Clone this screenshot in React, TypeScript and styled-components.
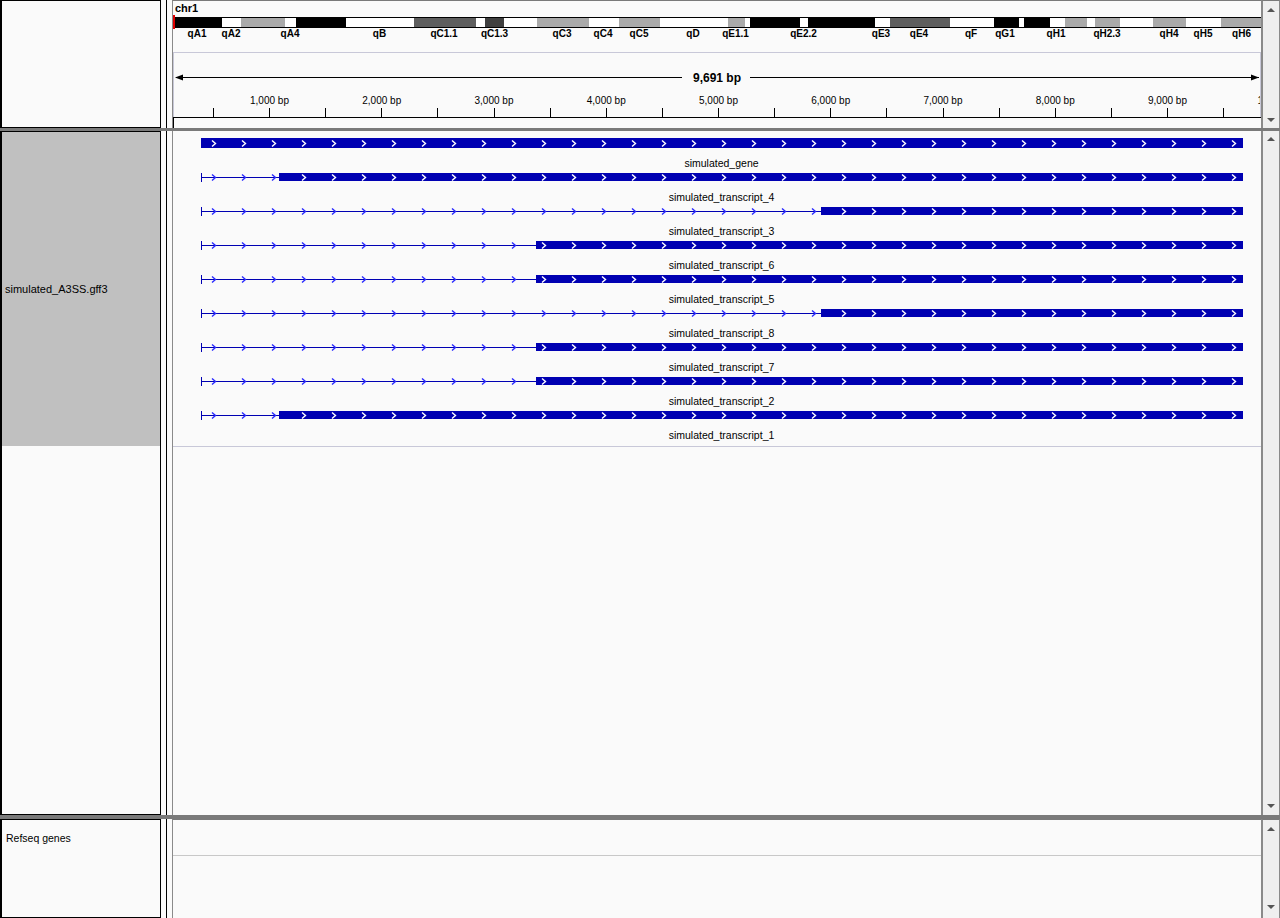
import React from "react";
import styled, { createGlobalStyle } from "styled-components";

const GlobalStyle = createGlobalStyle`
  html, body {
    margin: 0;
    padding: 0;
    background: #fafafa;
  }
  body {
    font-family: "Liberation Sans", Arial, sans-serif;
  }
`;

// ruler scale, page pixels
const PX0 = 156.75;
const PX_PER_BP = 0.11225;
const bpX = (b: number) => PX0 + b * PX_PER_BP;

const BANDS: [number, number, string][] = [
  [175, 222, "#000"],
  [222, 241, "#fff"],
  [241, 285, "#aaa"],
  [285, 296, "#fff"],
  [296, 346, "#000"],
  [346, 414, "#fff"],
  [414, 476, "#5e5e5e"],
  [476, 485, "#fff"],
  [485, 504, "#404040"],
  [504, 537, "#fff"],
  [537, 589, "#aaa"],
  [589, 619, "#fff"],
  [619, 660, "#aaa"],
  [660, 728, "#fff"],
  [728, 745, "#aaa"],
  [745, 750, "#fff"],
  [750, 800, "#000"],
  [800, 808, "#fff"],
  [808, 875, "#000"],
  [875, 890, "#fff"],
  [890, 950, "#5e5e5e"],
  [950, 994, "#fff"],
  [994, 1019, "#000"],
  [1019, 1024, "#fff"],
  [1024, 1050, "#000"],
  [1050, 1065, "#fff"],
  [1065, 1087, "#aaa"],
  [1087, 1095, "#fff"],
  [1095, 1120, "#aaa"],
  [1120, 1153, "#fff"],
  [1153, 1186, "#aaa"],
  [1186, 1221, "#fff"],
  [1221, 1261, "#aaa"],
];

const BAND_LABELS: [string, number][] = [
  ["qA1", 197],
  ["qA2", 231],
  ["qA4", 290],
  ["qB", 379.5],
  ["qC1.1", 444],
  ["qC1.3", 494.5],
  ["qC3", 562],
  ["qC4", 603],
  ["qC5", 639],
  ["qD", 693],
  ["qE1.1", 735.5],
  ["qE2.2", 803.5],
  ["qE3", 881],
  ["qE4", 919],
  ["qF", 971],
  ["qG1", 1005],
  ["qH1", 1056],
  ["qH2.3", 1107],
  ["qH4", 1169],
  ["qH5", 1203],
  ["qH6", 1241.5],
];

// feature rows: exon start in page x (201 = whole feature is one block)
const ROWS = [
  { label: "simulated_gene", exon: 201, gene: true },
  { label: "simulated_transcript_4", exon: 279 },
  { label: "simulated_transcript_3", exon: 821 },
  { label: "simulated_transcript_6", exon: 536 },
  { label: "simulated_transcript_5", exon: 536 },
  { label: "simulated_transcript_8", exon: 821 },
  { label: "simulated_transcript_7", exon: 536 },
  { label: "simulated_transcript_2", exon: 536 },
  { label: "simulated_transcript_1", exon: 279 },
];

const DATA_X = 173;
const F_START = 201 - DATA_X;
const F_END = 1243 - DATA_X;
const CHEVRONS = Array.from({ length: 35 }, (_, k) => 41 + 30 * k).filter(
  (x) => x > F_START + 4 && x < F_END - 3
);

const Frame = styled.div`
  width: 1280px;
  height: 918px;
  display: flex;
  flex-direction: column;
  background: #fafafa;
  overflow: hidden;
`;

const Section = styled.div<{ $h: number }>`
  display: flex;
  flex: none;
  height: ${(p) => p.$h}px;
`;

const Divider = styled.div<{ $h: number }>`
  flex: none;
  height: ${(p) => p.$h}px;
  background: #7a7a7a;
`;

const NamePanel = styled.div`
  width: 161px;
  flex: none;
  box-sizing: border-box;
  border: 1px solid #000;
  border-left-width: 2px;
  background: #fafafa;
  display: flex;
  flex-direction: column;
`;

const TrackName = styled.div<{ $h: number }>`
  height: ${(p) => p.$h}px;
  background: #c0c0c0;
  display: flex;
  align-items: center;
  padding-left: 3px;
  font-size: 11px;
  color: #000;
  flex: none;
`;

const PlainName = styled.div`
  padding: 12px 0 0 4px;
  font-size: 10.5px;
  line-height: 12px;
  color: #000;
`;

const AttrColumn = styled.div`
  width: 11px;
  flex: none;
  background: linear-gradient(
    90deg,
    transparent 5px,
    #000 5px,
    #000 6px,
    transparent 6px
  );
`;

const DataPanel = styled.div<{ $top?: boolean }>`
  flex: 1;
  min-width: 0;
  box-sizing: border-box;
  border-left: 1px solid #8a8a8a;
  border-top: ${(p) => (p.$top ? "1px solid #7a7a7a" : "none")};
  display: flex;
  flex-direction: column;
  overflow: hidden;
  background: #fafafa;
`;

const Scrollbar = styled.div<{ $pad: string; $top?: boolean }>`
  width: 19px;
  flex: none;
  box-sizing: border-box;
  border-left: 2px solid #8a8a8a;
  border-right: 1px solid #8a8a8a;
  border-top: ${(p) => (p.$top ? "1px solid #7a7a7a" : "none")};
  background: #efefef;
  display: flex;
  flex-direction: column;
  justify-content: space-between;
  align-items: center;
  padding: ${(p) => p.$pad};
`;

const ScrollArrow = styled.span<{ $down?: boolean }>`
  width: 0;
  height: 0;
  border-left: 4px solid transparent;
  border-right: 4px solid transparent;
  ${(p) =>
    p.$down
      ? "border-top: 4px solid #555;"
      : "border-bottom: 4px solid #555;"}
`;

const ChromArea = styled.div`
  height: 51px;
  flex: none;
  display: flex;
  flex-direction: column;
`;

const ChrLabel = styled.div`
  padding: 1px 0 0 2px;
  height: 13px;
  font-size: 11px;
  line-height: 13px;
  font-weight: bold;
  color: #000;
`;

const RulerBox = styled.div`
  height: 65px;
  flex: none;
  box-sizing: border-box;
  border-top: 1px solid #c8c8d8;
  border-left: 1px solid #c8c8d8;
  border-right: 1px solid #c8c8d8;
`;

const BottomStrip = styled.div`
  flex: 1;
  border-top: 1px solid #000;
  border-left: 1px solid #000;
`;

const FeatureTrack = styled.div`
  height: 316px;
  flex: none;
  box-sizing: border-box;
  border-bottom: 1px solid #c8c8d8;
`;

const RefTrack = styled.div`
  height: 36px;
  flex: none;
  box-sizing: border-box;
  border-bottom: 1px solid #c8c8c8;
`;

const Drawing = styled.svg`
  display: block;
  overflow: hidden;
  text {
    font-family: "Liberation Sans", Arial, sans-serif;
  }
`;

const Ideogram = () => (
  <Drawing width={1088} height={37}>
    {BANDS.map(([a, b, c]) => (
      <rect
        key={a}
        x={a - DATA_X}
        y={2}
        width={b - a}
        height={11}
        fill={c}
        shapeRendering="crispEdges"
      />
    ))}
    <rect x={2} y={2} width={1086} height={1} fill="#000" shapeRendering="crispEdges" />
    <rect x={2} y={12} width={1086} height={1} fill="#000" shapeRendering="crispEdges" />
    <rect x={0} y={0} width={2} height={14} fill="#e00000" shapeRendering="crispEdges" />
    {BAND_LABELS.map(([t, x]) => (
      <text
        key={t}
        x={x - DATA_X}
        y={22}
        fontSize={10}
        fontWeight="bold"
        textAnchor="middle"
        fill="#000"
      >
        {t}
      </text>
    ))}
  </Drawing>
);

const Ruler = () => {
  const off = 174;
  const ticks = Array.from({ length: 19 }, (_, i) => 500 * (i + 1));
  const labels = Array.from({ length: 10 }, (_, i) => 1000 * (i + 1));
  return (
    <Drawing width={1086} height={64}>
      <rect x={2} y={24} width={506} height={1} fill="#000" shapeRendering="crispEdges" />
      <rect x={576} y={24} width={509} height={1} fill="#000" shapeRendering="crispEdges" />
      <polygon points="1,24.5 9,21.5 9,27.5" fill="#000" />
      <polygon points="1085,24.5 1077,21.5 1077,27.5" fill="#000" />
      <text x={717 - off} y={28.5} fontSize={12} fontWeight="bold" textAnchor="middle" fill="#000">
        9,691 bp
      </text>
      {ticks.map((b) => (
        <rect
          key={b}
          x={Math.round(bpX(b)) - off}
          y={55}
          width={1}
          height={9}
          fill="#000"
          shapeRendering="crispEdges"
        />
      ))}
      {labels.map((b) => (
        <text
          key={b}
          x={bpX(b) - off + 0.5}
          y={50.5}
          fontSize={10}
          textAnchor="middle"
          fill="#000"
        >
          {`${(b / 1000).toLocaleString("en-US")},000 bp`}
        </text>
      ))}
    </Drawing>
  );
};

const Chevron = ({ x, c, color }: { x: number; c: number; color: string }) => (
  <polyline
    points={`${x - 2},${c - 3} ${x + 1.5},${c} ${x - 2},${c + 3}`}
    fill="none"
    stroke={color}
    strokeWidth={1.4}
  />
);

const Features = () => (
  <Drawing width={1088} height={315}>
    {ROWS.map((r, i) => {
      const c = 12 + 34 * i;
      const ex = r.exon - DATA_X;
      const half = r.gene ? 5 : 4;
      return (
        <g key={r.label}>
          {ex > F_START && (
            <>
              <rect x={F_START} y={c} width={ex - F_START} height={1} fill="#0000b2" shapeRendering="crispEdges" />
              <rect x={F_START} y={c - 4} width={1} height={9} fill="#0000b2" shapeRendering="crispEdges" />
            </>
          )}
          <rect
            x={ex}
            y={c - half}
            width={F_END - ex}
            height={half * 2}
            fill="#0000b2"
            shapeRendering="crispEdges"
          />
          {CHEVRONS.map((x) => (
            <Chevron
              key={x}
              x={x}
              c={c + 0.5}
              color={x < ex ? "#2a2aff" : "#ffffff"}
            />
          ))}
          <text x={548.5} y={c + 23.5} fontSize={10.5} textAnchor="middle" fill="#000">
            {r.label}
          </text>
        </g>
      );
    })}
  </Drawing>
);

export default function App() {
  return (
    <>
      <GlobalStyle />
      <Frame>
        <Section $h={128}>
          <NamePanel />
          <AttrColumn />
          <DataPanel $top>
            <ChromArea>
              <ChrLabel>chr1</ChrLabel>
              <Ideogram />
            </ChromArea>
            <RulerBox>
              <Ruler />
            </RulerBox>
            <BottomStrip />
          </DataPanel>
          <Scrollbar $pad="7px 0 6px" $top>
            <ScrollArrow />
            <ScrollArrow $down />
          </Scrollbar>
        </Section>
        <Divider $h={3} />
        <Section $h={684}>
          <NamePanel>
            <TrackName $h={314}>simulated_A3SS.gff3</TrackName>
          </NamePanel>
          <AttrColumn />
          <DataPanel>
            <FeatureTrack>
              <Features />
            </FeatureTrack>
          </DataPanel>
          <Scrollbar $pad="6px 0 7px">
            <ScrollArrow />
            <ScrollArrow $down />
          </Scrollbar>
        </Section>
        <Divider $h={4} />
        <Section $h={99}>
          <NamePanel>
            <PlainName>Refseq genes</PlainName>
          </NamePanel>
          <AttrColumn />
          <DataPanel $top>
            <RefTrack />
          </DataPanel>
          <Scrollbar $pad="7px 0 9px" $top>
            <ScrollArrow />
            <ScrollArrow $down />
          </Scrollbar>
        </Section>
      </Frame>
    </>
  );
}
